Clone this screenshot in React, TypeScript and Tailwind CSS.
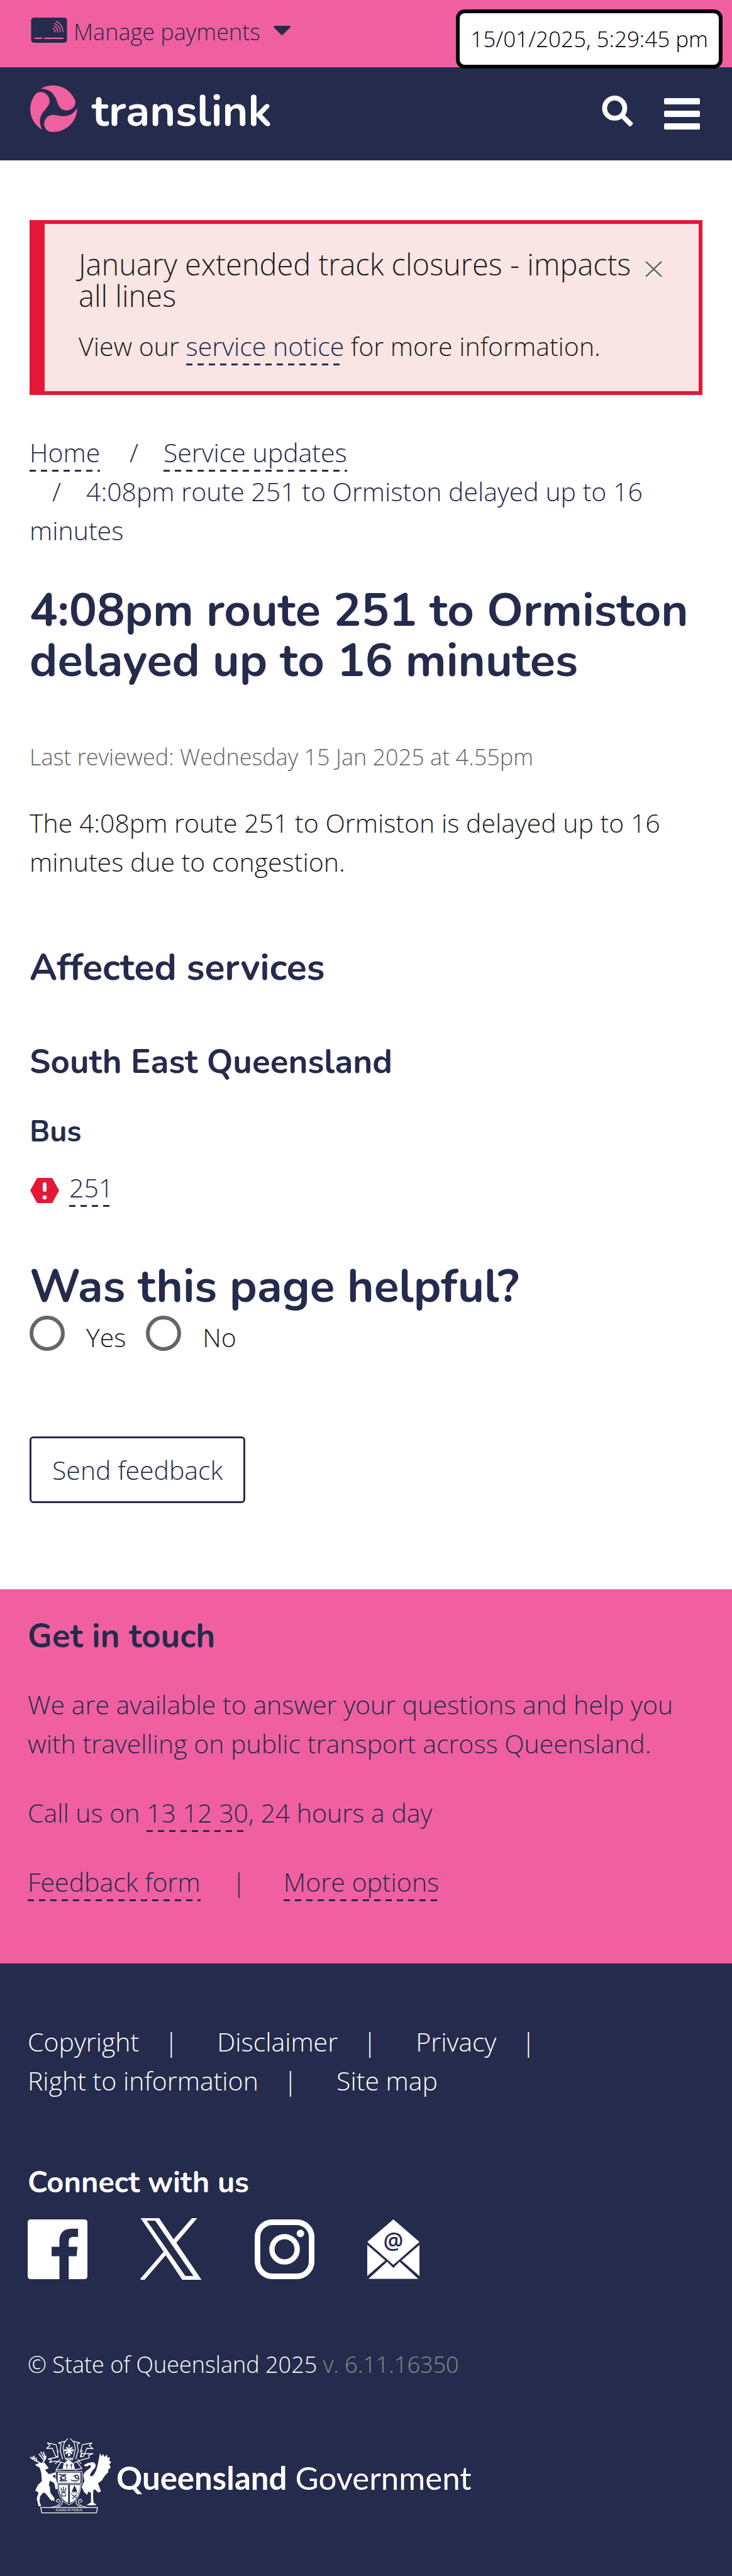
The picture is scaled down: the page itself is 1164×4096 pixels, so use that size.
import React from 'react';

const linkLine =
  'pb-[3px] bg-[linear-gradient(90deg,#252b4c_0px,#252b4c_10px,transparent_10px)] bg-[length:18px_3px] bg-left-bottom bg-repeat-x';

function DashedLink({ children }: { children: React.ReactNode }) {
  return (
    <a href="#" className={`text-[#252b4c] ${linkLine}`}>
      {children}
    </a>
  );
}

function CardIcon() {
  return (
    <svg viewBox="0 0 174 122" className="mt-1 h-[40px] w-[58px] shrink-0" aria-hidden="true">
      <rect width="174" height="122" rx="14" fill="#252b4c" />
      <g fill="none" stroke="#f060a0" strokeLinecap="round">
        <path d="M20 100H51M65 100H155" strokeWidth="7" />
        <path d="M123 18Q154 34 154 69M114 29Q141 42 141 69M111 41Q129 48 128 69M107 53Q116 58 116 69" strokeWidth="5" />
      </g>
    </svg>
  );
}

function TranslinkMark() {
  const blade = 'M55 18A116 116 0 0 1 222 78C226 102 206 125 178 124C140 122 138 88 126 62C112 34 92 20 55 18Z';
  return (
    <svg viewBox="0 0 232 232" className="h-[76px] w-[76px] shrink-0" aria-hidden="true">
      <g fill="#f060a0">
        <path d={blade} />
        <path d={blade} transform="rotate(120 116 116)" />
        <path d={blade} transform="rotate(240 116 116)" />
      </g>
    </svg>
  );
}

function AlertIcon() {
  return (
    <svg viewBox="0 0 46 40" className="mb-1.5 ml-px h-[40px] w-[46px] self-end" aria-hidden="true">
      <path d="M11 0H35L46 20L35 40H11L0 20Z" fill="#e31837" />
      <rect x="20" y="7" width="6" height="15" rx="3" fill="#fff" />
      <circle cx="23" cy="31" r="3.3" fill="#fff" />
    </svg>
  );
}

function CoatOfArms() {
  return (
    <svg viewBox="52 78 396 370" className="h-[121px] w-[130px] shrink-0" role="img" aria-label="Queensland coat of arms">
      <g fill="#fff">
        <path d="M77 210L98 201L124 200L141 222L144 228L128 232L131 241L146 256L165 250L178 247V258L162 264L180 280L186 300L188 326L178 330L172 300L150 287L145 308L150 318L152 345L172 372V385L156 383L130 350L118 344L102 365L100 390L108 411L95 411L86 374L95 345L79 335L92 308L111 290L108 250L101 225L84 214Z" />
        <path d="M315 212C325 204 338 199 355 197C371 198 376 210 371 222C362 236 348 246 345 262C352 272 360 262 366 254C380 236 385 196 394 153L402 170L409 157L416 172L428 160L430 176L442 173L439 190L448 196L439 210L446 222L433 235L434 246L418 262L402 287L384 300L399 340L385 345L370 330H362L360 360L362 392L377 407H328L350 392V346L336 340L332 356L318 345L304 318L318 290L312 262C316 244 336 236 349 222C352 212 345 209 338 213C331 220 322 219 315 212Z" />
        <path d="M188 248H299V298H188Z" />
        <path d="M193 308H239V396C208 384 194 350 193 308Z" />
        <path d="M247 308H297C296 350 282 384 247 396Z" />
        <path d="M217 203L240 186L266 203L272 234H212Z" />
        <path d="M222 176H266L262 188H226Z" />
        <path d="M232 122L243 132L239 112H248L245 132L257 122L262 128L250 137L266 134V145L250 142L261 152L255 160L246 150L250 168H237L241 150L229 160L224 152L237 142L220 145V134L237 137L227 128Z" />
      </g>
      <g fill="none" stroke="#fff" strokeWidth="4" strokeLinejoin="round" strokeLinecap="round">
        <path d="M105 202C92 192 72 194 66 172M66 184L56 173M78 190L72 168M88 194L82 176M113 202C128 190 130 172 118 148M124 180L106 148M122 190L98 158M128 182L131 168" strokeWidth="5" />
        <path d="M180 242H307V303H180ZM188 303C188 350 200 388 243 404C286 388 300 350 300 303" strokeWidth="3" />
        <path d="M237 83L220 102L214 132L222 172M250 83L268 102L274 132L266 172M222 96L192 104L205 110L200 140L212 182M266 96L296 104L283 110L288 140L276 182" />
        <path d="M190 150L180 112L138 104L150 116L134 130L162 130L178 168L190 172L186 138M298 150L308 112L354 104L342 116L360 132L330 130L314 168L302 172L306 138" />
        <path d="M190 172L142 182L158 186L148 198L178 192L216 200M298 172L302 156L360 156L338 164L342 176L304 186L268 200" />
        <path d="M204 196L180 236L212 232M282 196L306 228L272 234M200 184L176 204M286 184L300 204" />
        <path d="M105 418H382L376 444H111Z" />
        <path d="M160 416C205 410 208 382 190 378C176 380 182 396 192 390M186 416C206 408 214 396 210 384M328 416C284 410 280 382 298 378C312 380 306 396 296 390M300 416C284 408 274 396 278 384" strokeWidth="3.5" />
      </g>
      <g fill="none" stroke="#252b4c" strokeWidth="4" strokeLinecap="round">
        <path d="M233 205V228M227 212H239M254 205V228M248 212H260M224 182H264" strokeWidth="3" />
        <path d="M196 256C208 264 220 258 228 258M198 288H232M200 270L206 284M254 284C270 292 290 290 292 276M268 266C284 254 294 264 288 274C280 280 270 272 276 268" strokeWidth="5" />
        <ellipse cx="216" cy="273" rx="11" ry="9" strokeWidth="5" />
        <path d="M204 322L210 342M216 318V342M229 322L222 342M206 346H226M208 352V362H226V352" />
        <path d="M258 357L280 369M280 355L260 374" />
        <path d="M248 352C260 344 284 346 292 350" strokeWidth="2" />
      </g>
      <path d="M270 310L284 342H256Z" fill="#252b4c" />
      <text x="243" y="437" textAnchor="middle" fill="#fff" fontSize="15" fontFamily="Lato, sans-serif">
        AUDAX AT FIDELIS
      </text>
    </svg>
  );
}

const legalLinks = ['Copyright', 'Disclaimer', 'Privacy', 'Right to information', 'Site map'];

export default function App() {
  return (
    <div className="relative min-h-screen bg-white font-['Open_Sans',sans-serif] text-[41px] leading-[62px] font-light text-[#1c1c1c]">
      <div className="absolute top-[15px] right-[15px] rounded-[14px] border-[6px] border-black bg-white px-[17px] text-[35px] leading-[82px] text-black">
        15/01/2025, 5:29:45 pm
      </div>

      <div className="flex h-[107px] bg-[#f060a0] pt-6 pl-[49px]">
        <button type="button" className="flex items-start text-[36px] leading-[54px] text-[#252b4c]">
          <CardIcon />
          <span className="ml-2.5">Manage payments</span>
          <svg viewBox="0 0 82 45" className="mt-[17px] ml-[21px] h-[15px] w-[27px]" aria-hidden="true">
            <path d="M5 0H77Q84 2 80 8L46 42Q41 47 36 42L2 8Q-2 2 5 0Z" fill="#252b4c" />
          </svg>
        </button>
      </div>

      <header className="flex h-[148px] items-start bg-[#252b4c] pt-7 pr-[51px] pl-[47px] text-white">
        <a href="#" className="flex items-start font-['Nunito','Lato',sans-serif] text-[70px] leading-[84px] font-bold">
          <TranslinkMark />
          <span className="ml-[23px]">translink</span>
        </a>
        <button type="button" aria-label="Search" className="mt-[17px] ml-auto">
          <svg viewBox="0 0 150 150" className="block h-[49px] w-[50px]" aria-hidden="true">
            <circle cx="61" cy="61" r="49" fill="none" stroke="#fff" strokeWidth="24" />
            <rect x="-24" y="-12" width="58" height="24" rx="6" fill="#fff" transform="translate(120 120) rotate(45)" />
          </svg>
        </button>
        <button type="button" aria-label="Menu" className="mt-[21px] ml-[49px] flex w-[57px] flex-col gap-2.5">
          <span className="h-2.5 w-full rounded-xs bg-white" />
          <span className="h-2.5 w-full rounded-xs bg-white" />
          <span className="h-2.5 w-full rounded-xs bg-white" />
        </button>
      </header>

      <main className="px-[47px] pb-[137px]">
        <section className="mt-[95px] flex items-start border-[6px] border-l-[24px] border-[#e31837] bg-[#f9e5e3] pt-[39px] pr-[58px] pb-[41px] pl-[54px]">
          <div className="flex-1">
            <h2 className="text-[47px] leading-[50px]">January extended track closures - impacts all lines</h2>
            <p className="mt-6">
              View our <DashedLink>service notice</DashedLink> for more information.
            </p>
          </div>
          <button type="button" aria-label="Close" className="mt-5">
            <svg viewBox="0 0 27 29" className="block h-[29px] w-[27px]" fill="none" strokeWidth="2.5" aria-hidden="true">
              <path d="M1 4L26 28M26 4L1 28" stroke="#fff" />
              <path d="M1 1L26 25M26 1L1 25" stroke="#6f6a6a" />
            </svg>
          </button>
        </section>

        <nav aria-label="Breadcrumb" className="mt-[60px] text-[#252b4c]">
          <span className="inline-block">
            <DashedLink>Home</DashedLink>
          </span>{' '}
          <span className="inline-block">
            <span className="pr-10 pl-9">/</span>
            <DashedLink>Service updates</DashedLink>
          </span>{' '}
          <span className="inline-block">
            <span className="pr-10 pl-9">/</span>
            4:08pm route 251 to Ormiston delayed up to 16 minutes
          </span>
        </nav>

        <h1 className="mt-[57px] font-['Nunito','Lato',sans-serif] text-[74px] leading-[80px] font-bold text-[#252b4c]">
          4:08pm route 251 to Ormiston delayed up to 16 minutes
        </h1>
        <p className="mt-[86px] text-[36px] leading-[54px] text-[#666]">
          Last reviewed: Wednesday 15 Jan 2025 at 4.55pm
        </p>
        <p className="mt-[46px]">The 4:08pm route 251 to Ormiston is delayed up to 16 minutes due to congestion.</p>

        <h2 className="mt-[106px] font-['Nunito','Lato',sans-serif] text-[59px] leading-[64px] font-bold text-[#252b4c]">
          Affected services
        </h2>
        <h3 className="mt-[89px] font-['Nunito','Lato',sans-serif] text-[53px] leading-[58px] font-bold text-[#252b4c]">
          South East Queensland
        </h3>
        <h4 className="mt-[56px] font-['Nunito','Lato',sans-serif] text-[47px] leading-[52px] font-bold text-[#252b4c]">
          Bus
        </h4>
        <div className="mt-[31px] flex gap-4">
          <AlertIcon />
          <div>
            <DashedLink>251</DashedLink>
          </div>
        </div>

        <form className="mt-[87px]" onSubmit={(e) => e.preventDefault()}>
          <fieldset>
            <legend className="font-['Nunito','Lato',sans-serif] text-[73px] leading-[80px] font-bold text-[#252b4c]">
              Was this page helpful?
            </legend>
            <div className="mt-1.5 flex gap-8">
              <label className="flex items-start gap-[34px]">
                <input type="radio" name="helpful" className="h-[56px] w-[56px] appearance-none rounded-full border-[6px] border-[#666]" />
                <span className="pt-[3px]">Yes</span>
              </label>
              <label className="flex items-start gap-[34px]">
                <input type="radio" name="helpful" className="h-[56px] w-[56px] appearance-none rounded-full border-[6px] border-[#666]" />
                <span className="pt-[3px]">No</span>
              </label>
            </div>
          </fieldset>
          <button type="submit" className="mt-[127px] block rounded-md border-[3px] border-[#252b4c] px-[33px] py-[19px] text-[#252b4c]">
            Send feedback
          </button>
        </form>
      </main>

      <section className="bg-[#f060a0] px-11 pt-[46px] pb-[99px] text-[#252b4c]">
        <h2 className="font-['Nunito','Lato',sans-serif] text-[53px] leading-[58px] font-bold">Get in touch</h2>
        <p className="mt-12">
          We are available to answer your questions and help you with travelling on public transport across Queensland.
        </p>
        <p className="mt-12">
          Call us on <DashedLink>13 12 30</DashedLink>, 24 hours a day
        </p>
        <p className="mt-12">
          <DashedLink>Feedback form</DashedLink>
          <span className="px-[50px]">|</span>
          <span className="pl-2.5">
            <DashedLink>More options</DashedLink>
          </span>
        </p>
      </section>

      <footer className="bg-[#252b4c] px-11 pt-[93px] pb-[101px] text-white">
        <ul className="flex flex-wrap gap-x-[62px]">
          {legalLinks.map((label, i) => (
            <li key={label}>
              <a href="#">{label}</a>
              {i < legalLinks.length - 1 && <span className="ml-10">|</span>}
            </li>
          ))}
        </ul>

        <h2 className="mt-[106px] font-['Nunito','Lato',sans-serif] text-[47px] leading-[52px] font-bold">Connect with us</h2>
        <div className="mt-[30px] flex items-center gap-[84px]">
          <a href="#" aria-label="Facebook">
            <svg viewBox="0 0 96 96" className="block h-[95px] w-[95px]" fill="#fff">
              <path d="M5 0H91Q96 0 96 5V91Q96 96 91 96H66V59H78.600L80 44H66V36C66 31 68 28 74 28H81V15H71C58 15 51 22 51 34V44H38.500V59H51V96H5Q0 96 0 91V5Q0 0 5 0Z" />
            </svg>
          </a>
          <a href="#" aria-label="X">
            <svg viewBox="0 0 98 99" className="block h-[98px] w-[98px]" fill="#fff" fillRule="evenodd">
              <path d="M0 0H30L53 34L82.500 0H91L57.500 39.500L98 99H67L40.500 59.500L6.500 99H0V97L37 54ZM10 4L72 93H85L23.500 4Z" />
            </svg>
          </a>
          <a href="#" aria-label="Instagram">
            <svg viewBox="0 0 96 96" className="block h-[95px] w-[95px]" fill="none" stroke="#fff">
              <rect x="4.500" y="4.500" width="87" height="87" rx="24" strokeWidth="9" />
              <circle cx="48" cy="48" r="20.300" strokeWidth="8.500" />
              <circle cx="73.500" cy="22.500" r="6" fill="#fff" stroke="none" />
            </svg>
          </a>
          <a href="#" aria-label="Email">
            <svg viewBox="0 0 84 96" className="block h-[95px] w-[83px]" fill="#fff">
              <path d="M42 0L84 36L42 73L0 36ZM0 41L29 66L0 91ZM84 41L55 66L84 91ZM2 95.500L32 68L42 78L52 68L82 95.500Z" />
              <text x="42" y="48" textAnchor="middle" fontSize="36" fontWeight="600" fontFamily="Open Sans, sans-serif" fill="#252b4c">
                @
              </text>
            </svg>
          </a>
        </div>

        <p className="mt-[108px] text-[36px] leading-[54px]">
          © State of Queensland 2025 <span className="text-[#8a8a8a]">v. 6.11.16350</span>
        </p>
        <a href="#" className="mt-[89px] ml-[3px] flex items-center gap-2 font-['Lato',sans-serif] text-[51px] leading-[60px] font-normal">
          <CoatOfArms />
          <span className="pt-1.5">
            <strong className="font-bold">Queensland</strong> Government
          </span>
        </a>
      </footer>
    </div>
  );
}
